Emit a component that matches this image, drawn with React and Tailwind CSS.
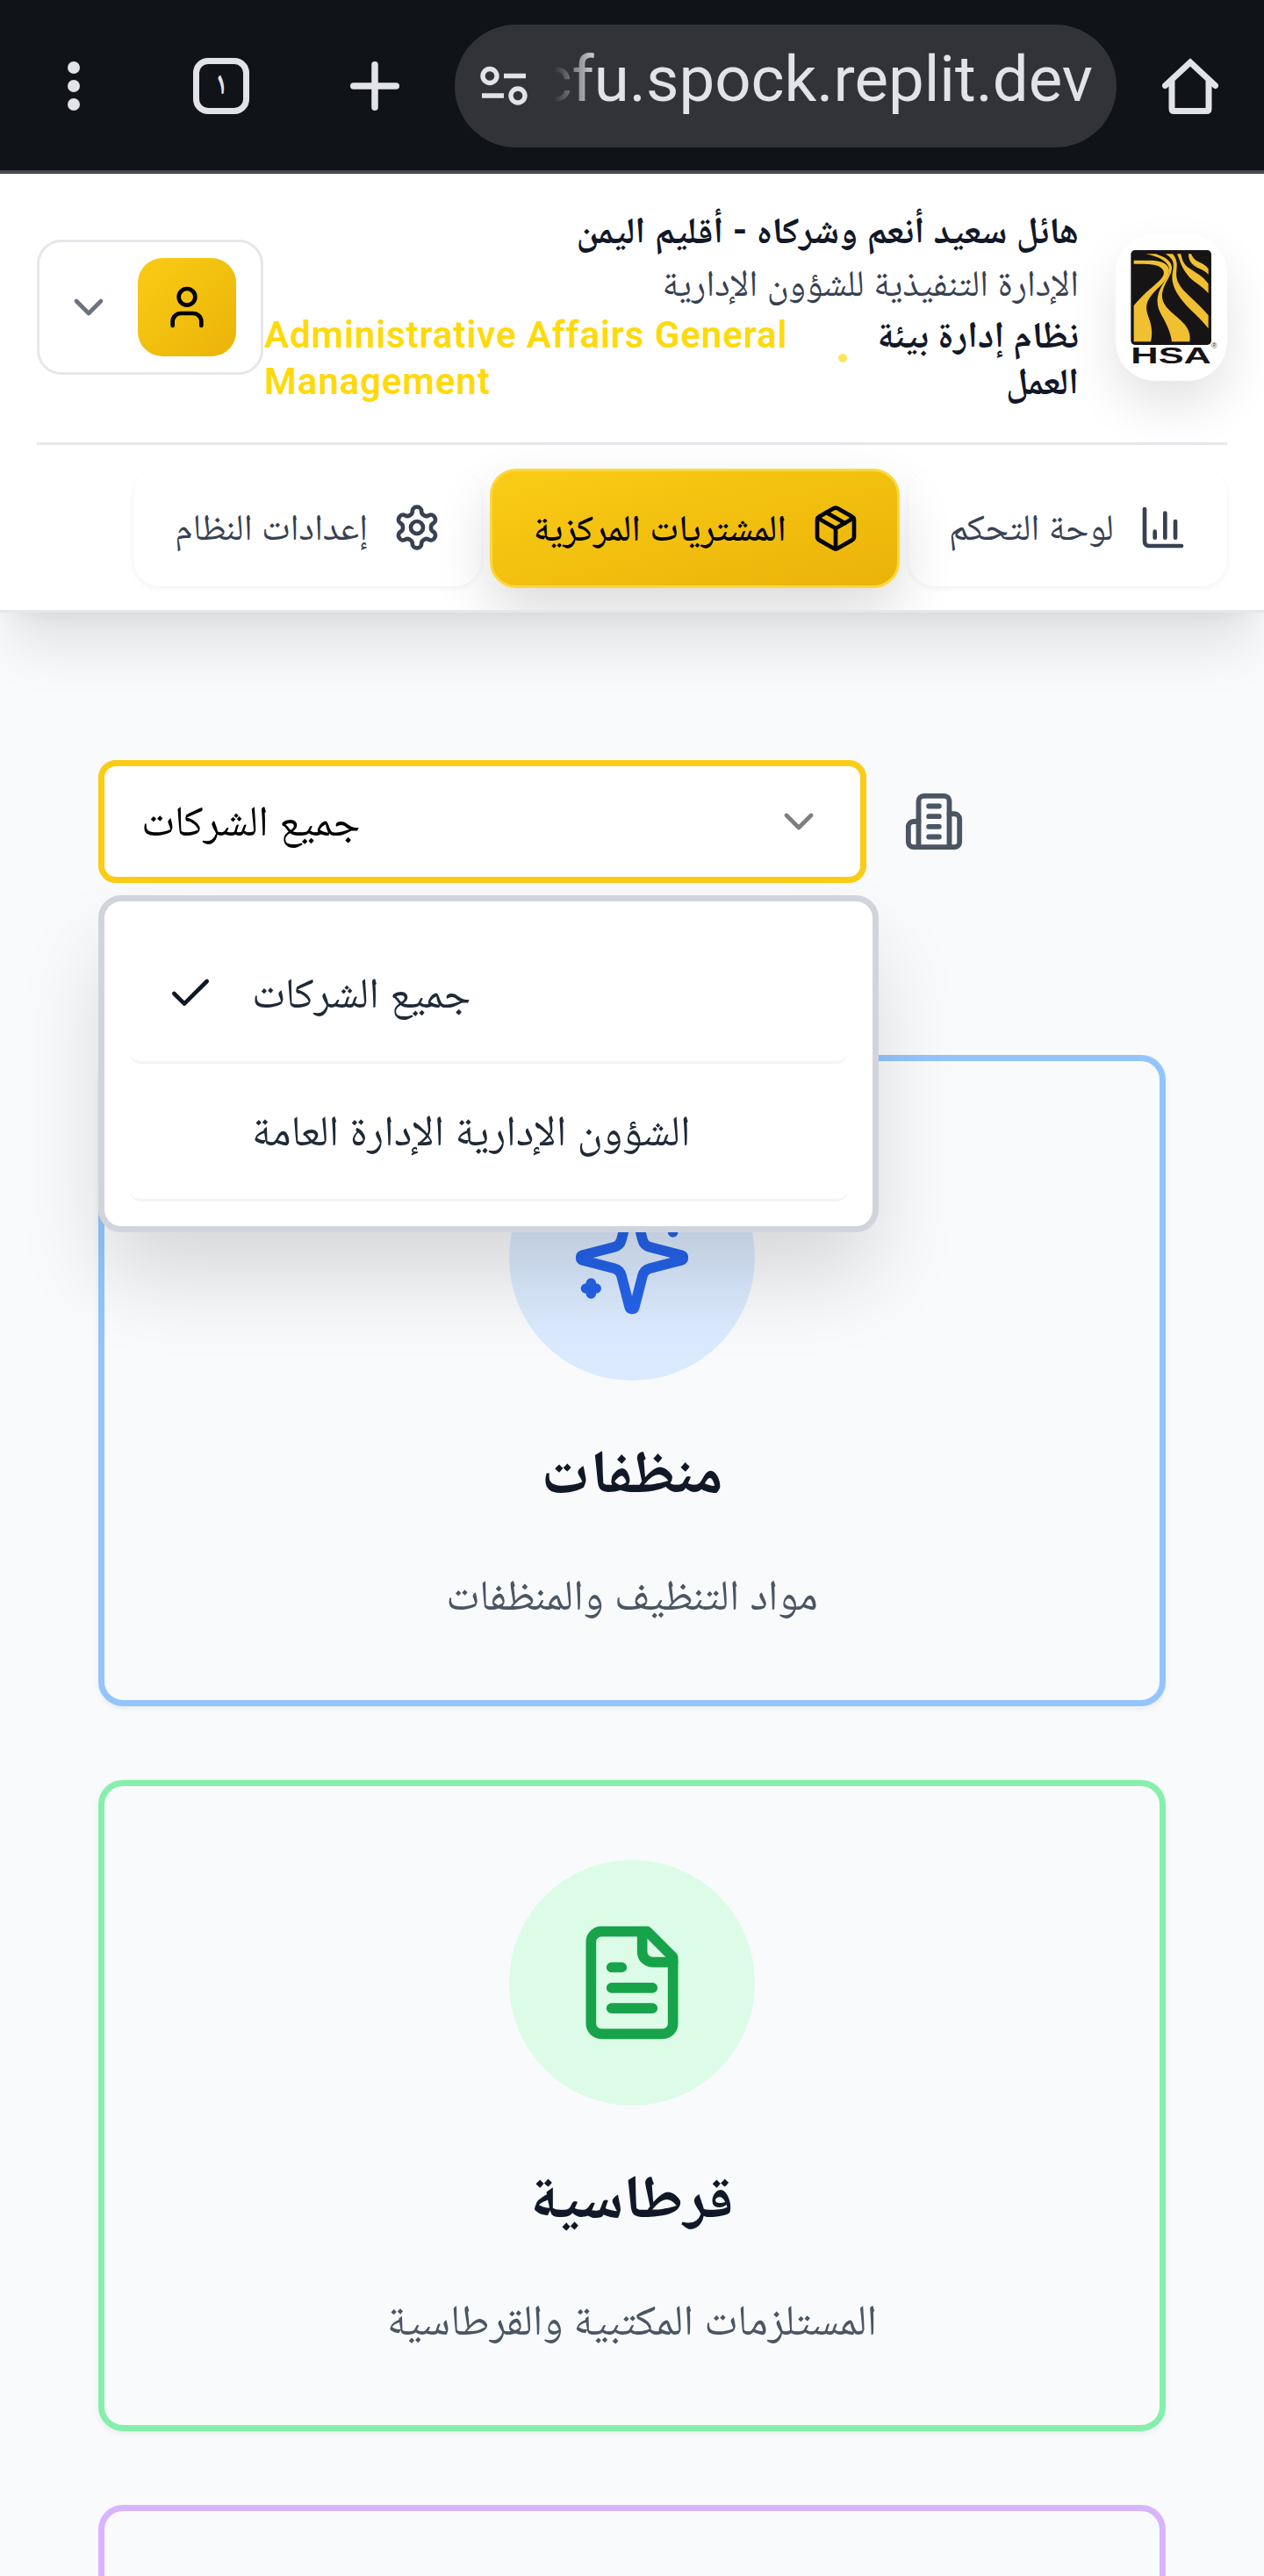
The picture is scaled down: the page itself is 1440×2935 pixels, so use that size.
function Icon({ size, className, children }) {
  return (
    <svg width={size} height={size} viewBox="0 0 24 24" fill="none" stroke="currentColor" strokeWidth="2" strokeLinecap="round" strokeLinejoin="round" className={`shrink-0 ${className || ''}`}>
      {children}
    </svg>
  );
}

function BrowserBar() {
  return (
    <div dir="ltr" className="flex h-[198px] items-center border-b-4 border-[#47494d] bg-[#101318] pt-[2px] text-[#e2e2e9]">
      <svg width="14" height="56" viewBox="0 0 14 56" fill="currentColor" className="ml-[77px] shrink-0">
        <circle cx="7" cy="7" r="7" />
        <circle cx="7" cy="28" r="7" />
        <circle cx="7" cy="49" r="7" />
      </svg>
      <div className="ml-[129px] flex size-16 shrink-0 items-center justify-center rounded-[17px] border-[7px] border-current pt-1 font-['Noto_Naskh_Arabic',serif] text-[36px] leading-none font-semibold">
        ١
      </div>
      <svg width="56" height="56" viewBox="0 0 56 56" stroke="currentColor" strokeWidth="7.5" strokeLinecap="round" className="ml-[115px] shrink-0">
        <path d="M28 3.75v48.5M3.75 28h48.5" />
      </svg>
      <div className="ml-[63px] flex h-[140px] w-[754px] shrink-0 items-center rounded-full bg-[#313338] pr-[27px] pl-[29px]">
        <svg width="54" height="46" viewBox="0 0 54 46" fill="none" stroke="currentColor" strokeWidth="5.4" className="shrink-0">
          <circle cx="11" cy="11.5" r="8" />
          <circle cx="43" cy="34" r="8" />
          <path d="M27 11.5h25M2 34h25" />
        </svg>
        <div className="ml-auto flex w-[614px] justify-end overflow-hidden mask-[linear-gradient(to_right,transparent_0,black_52px)] pb-[15px] font-[Roboto,sans-serif] text-[72.6px] leading-[88px] whitespace-nowrap">
          cfu.spock.replit.dev
        </div>
      </div>
      <svg width="64" height="64" viewBox="0 0 64 64" fill="none" stroke="currentColor" strokeWidth="7" strokeLinejoin="round" strokeLinecap="round" className="ml-[52px] shrink-0">
        <path d="M3.5 31.5L32 5l28.500 26.500" strokeLinejoin="miter" />
        <path d="M11 27v31q0 2.500 2.500 2.500h37q2.500 0 2.500-2.500V27" />
      </svg>
    </div>
  );
}

function Logo() {
  return (
    <div className="flex h-[168px] w-[127px] shrink-0 items-center rounded-[45px] bg-white pr-[11px] shadow-[0_28px_56px_rgba(0,0,0,0.11)]">
      <svg width="99.300" height="130" viewBox="114 72 298 390" className="overflow-visible">
        <rect x="115" y="72" width="275" height="324" rx="14" fill="#171416" />
        <g fill="#f0c032">
          <path d="M125 107h66c32 2 57 16 55 38c-2 30-34 50-59 79c-24 29-22 49-10 81c11 30 12 55 6 80H125V262c28-35 58-58 86-84c20-19 22-33 7-46c-14-11-35-13-93-13z" />
          <path d="M165 85h35c26 9 52 20 55 45c2 32-35 60-33 103c4 40 54 64 76 92c18 22 21 40 18 60h-61c-3-31-19-63-34-89c-17-29-20-57-8-86c13-31 37-50 33-75c-4-27-40-42-81-50z" />
          <path d="M233 85h25c15 18 16 35 13 57c-4 36 11 56 43 86c24 23 46 42 66 67v45c-28-37-57-57-86-92c-32-39-44-70-35-108c6-26-3-42-26-55z" />
          <path d="M273 85h13c3 16 8 33 22 44c25 18 53 31 72 58v33c-19-25-45-35-65-56c-25-26-30-51-42-79z" />
          <path d="M312 85h9c7 14 13 22 28 28c14 6 24 13 31 23v19c-14-15-31-18-46-28c-15-10-22-24-22-42z" />
        </g>
        <text x="115" y="459" textLength="275" lengthAdjust="spacingAndGlyphs" fontFamily="Liberation Sans, sans-serif" fontWeight="700" fontSize="76" fill="#171416" direction="ltr">HSA</text>
        <text x="391" y="407" fontFamily="Liberation Sans, sans-serif" fontSize="25" fill="#333" direction="ltr">®</text>
      </svg>
    </div>
  );
}

function Tab({ label, active, className, children }) {
  return (
    <div
      className={`flex shrink-0 items-center gap-[28px] rounded-[30px] pr-[42px] text-[42px] leading-[52px] whitespace-nowrap ${className} ${
        active
          ? 'relative h-[136px] border-[3px] border-[#fad83c] bg-linear-to-br from-[#facc15] to-[#eab308] font-medium text-black shadow-[0_28px_64px_rgba(0,0,0,0.14)]'
          : 'h-[134px] border-[3px] border-transparent text-[#374151] shadow-[0_3px_6px_rgba(0,0,0,0.05)]'
      }`}
    >
      <Icon size={56}>{children}</Icon>
      <span>{label}</span>
    </div>
  );
}

function Header() {
  return (
    <header className="relative h-[500px] overflow-hidden border-b-[3px] border-[#e5e7eb] bg-white px-[42px] shadow-[0_50px_60px_-14px_rgba(0,0,0,0.1),0_16px_20px_-14px_rgba(0,0,0,0.06)]">
      <div className="flex h-[309px] items-center border-b-[3px] border-[#e5e7eb] pb-[2px]">
        <Logo />
        <div className="mt-[-4px] mr-[42px] w-[928px] shrink-0 text-[42px] leading-[53px]">
          <div className="font-bold text-[#111827]">هائل سعيد أنعم وشركاه - أقليم اليمن</div>
          <div className="mt-[7px] text-[#374151]">الإدارة التنفيذية للشؤون الإدارية</div>
          <div className="mt-[6px] flex items-center">
            <div className="w-[240px] shrink-0 font-bold text-[#111827]">نظام إدارة بيئة العمل</div>
            <span className="mr-[24px] size-[10px] shrink-0 rounded-full bg-[#fde45c]" />
            <div dir="ltr" className="mr-[33px] w-[621px] shrink-0 text-left font-semibold tracking-[0.022em] text-[#ffd90a]">
              Administrative Affairs General Management
            </div>
          </div>
        </div>
        <div className="mr-[1px] flex h-[154px] w-[258px] shrink-0 items-center rounded-[28px] border-[3px] border-[#e5e7eb] pr-[28px]">
          <div className="flex size-[112px] items-center justify-center rounded-[28px] bg-linear-to-br from-[#facc15] to-[#eab308] text-black">
            <Icon size={56}>
              <path d="M19 21v-2a4 4 0 0 0-4-4H9a4 4 0 0 0-4 4v2" />
              <circle cx="12" cy="7" r="4" />
            </Icon>
          </div>
          <Icon size={56} className="mr-[28px] text-[#6b7280]">
            <path d="m6 9 6 6 6-6" />
          </Icon>
        </div>
      </div>
      <nav className="flex items-start gap-[10px] pt-[27px]">
        <Tab label="لوحة التحكم" className="w-[363px]">
          <path d="M3 3v16a2 2 0 0 0 2 2h16" />
          <path d="M18 17V9" />
          <path d="M13 17V5" />
          <path d="M8 17v-3" />
        </Tab>
        <Tab label="المشتريات المركزية" active className="w-[467px]">
          <path d="m7.500 4.270 9 5.150" />
          <path d="M21 8a2 2 0 0 0-1-1.730l-7-4a2 2 0 0 0-2 0l-7 4A2 2 0 0 0 3 8v8a2 2 0 0 0 1 1.730l7 4a2 2 0 0 0 2 0l7-4A2 2 0 0 0 21 16Z" />
          <path d="m3.300 7 8.700 5 8.700-5" />
          <path d="M12 22V12" />
        </Tab>
        <Tab label="إعدادات النظام" className="w-[396px]">
          <path d="M12.220 2h-.44a2 2 0 0 0-2 2v.18a2 2 0 0 1-1 1.730l-.43.25a2 2 0 0 1-2 0l-.15-.08a2 2 0 0 0-2.730.73l-.22.38a2 2 0 0 0 .73 2.730l.15.1a2 2 0 0 1 1 1.720v.51a2 2 0 0 1-1 1.740l-.15.09a2 2 0 0 0-.73 2.730l.22.38a2 2 0 0 0 2.730.73l.15-.08a2 2 0 0 1 2 0l.43.25a2 2 0 0 1 1 1.730V20a2 2 0 0 0 2 2h.44a2 2 0 0 0 2-2v-.18a2 2 0 0 1 1-1.730l.43-.25a2 2 0 0 1 2 0l.15.08a2 2 0 0 0 2.730-.73l.22-.39a2 2 0 0 0-.73-2.730l-.15-.08a2 2 0 0 1-1-1.740v-.5a2 2 0 0 1 1-1.740l.15-.09a2 2 0 0 0 .73-2.730l-.22-.38a2 2 0 0 0-2.730-.73l-.15.08a2 2 0 0 1-2 0l-.43-.25a2 2 0 0 1-1-1.730V4a2 2 0 0 0-2-2z" />
          <circle cx="12" cy="12" r="3" />
        </Tab>
      </nav>
    </header>
  );
}

function Option({ label, checked }) {
  return (
    <div className="flex h-[157px] items-center rounded-[14px] border-b-[3px] border-[#f3f4f6] pl-[42px]">
      <span className="mr-[42px] flex size-[56px] shrink-0 text-[#111827]">
        {checked && (
          <Icon size={56}>
            <path d="M20 6 9 17l-5-5" />
          </Icon>
        )}
      </span>
      <span className="text-[#1f2937]">{label}</span>
    </div>
  );
}

function CompanySelect() {
  return (
    <div dir="ltr" className="relative z-10 w-[875px] text-[49px] leading-[64px]">
      <div className="flex h-[140px] items-center justify-between rounded-[20px] border-[7px] border-[#facc15] bg-white pr-[42px] pl-[42px] text-black">
        <span>جميع الشركات</span>
        <Icon size={56} className="opacity-50">
          <path d="m6 9 6 6 6-6" />
        </Icon>
      </div>
      <div className="absolute top-[154px] left-0 w-[889px] rounded-[26px] border-[7px] border-[#d1d5db] bg-white p-[28px] shadow-[0_56px_100px_-6px_rgba(0,0,0,0.14)]">
        <Option label="جميع الشركات" checked />
        <Option label="الشؤون الإدارية الإدارة العامة" />
      </div>
    </div>
  );
}

function Category({ title, text, border, circle, children }) {
  return (
    <section className={`flex h-[742px] shrink-0 flex-col items-center rounded-[28px] border-[7px] pt-[84px] text-center shadow-[0_3px_6px_rgba(0,0,0,0.06)] ${border}`}>
      <div className={`flex size-[280px] items-center justify-center rounded-full ${circle}`}>
        <Icon size={140}>{children}</Icon>
      </div>
      <h3 className="mt-[61px] text-[69.6px] leading-[86px] font-bold text-[#111827]">{title}</h3>
      <p className="mt-[66px] text-[49px] leading-[64px] text-[#4b5563]">{text}</p>
    </section>
  );
}

export default function App() {
  return (
    <div dir="rtl" className="h-[2935px] w-[1440px] overflow-hidden bg-[#f9fafc] font-[Roboto,'Noto_Naskh_Arabic',serif]">
      <BrowserBar />
      <Header />
      <main className="px-[112px] pt-[168px]">
        <div className="flex items-center justify-end gap-[42px]">
          <Icon size={70} className="text-[#4b5563]">
            <path d="M6 22V4a2 2 0 0 1 2-2h8a2 2 0 0 1 2 2v18Z" />
            <path d="M6 12H4a2 2 0 0 0-2 2v6a2 2 0 0 0 2 2h2" />
            <path d="M18 9h2a2 2 0 0 1 2 2v9a2 2 0 0 1-2 2h-2" />
            <path d="M10 6h4M10 10h4M10 14h4M10 18h4" />
          </Icon>
          <CompanySelect />
        </div>
        <div className="mt-[196px] flex flex-col gap-[84px]">
          <Category title="منظفات" text="مواد التنظيف والمنظفات" border="border-[#93c5fd]" circle="bg-[#dbeafe] text-[#2563eb]">
            <path d="M9.937 15.500A2 2 0 0 0 8.500 14.063l-6.135-1.582a.5.5 0 0 1 0-.962L8.500 9.936A2 2 0 0 0 9.937 8.500l1.582-6.135a.5.5 0 0 1 .963 0L14.063 8.500A2 2 0 0 0 15.500 9.937l6.135 1.581a.5.5 0 0 1 0 .964L15.500 14.063a2 2 0 0 0-1.437 1.437l-1.582 6.135a.5.5 0 0 1-.963 0z" />
            <path d="M20 3v4M22 5h-4M4 17v2M5 18H3" />
          </Category>
          <Category title="قرطاسية" text="المستلزمات المكتبية والقرطاسية" border="border-[#86efac]" circle="bg-[#dcfce7] text-[#16a34a]">
            <path d="M15 2H6a2 2 0 0 0-2 2v16a2 2 0 0 0 2 2h12a2 2 0 0 0 2-2V7Z" />
            <path d="M14 2v4a2 2 0 0 0 2 2h4" />
            <path d="M10 9H8M16 13H8M16 17H8" />
          </Category>
          <section className="h-[742px] rounded-[28px] border-[7px] border-[#d8b4fe]" />
        </div>
      </main>
    </div>
  );
}
